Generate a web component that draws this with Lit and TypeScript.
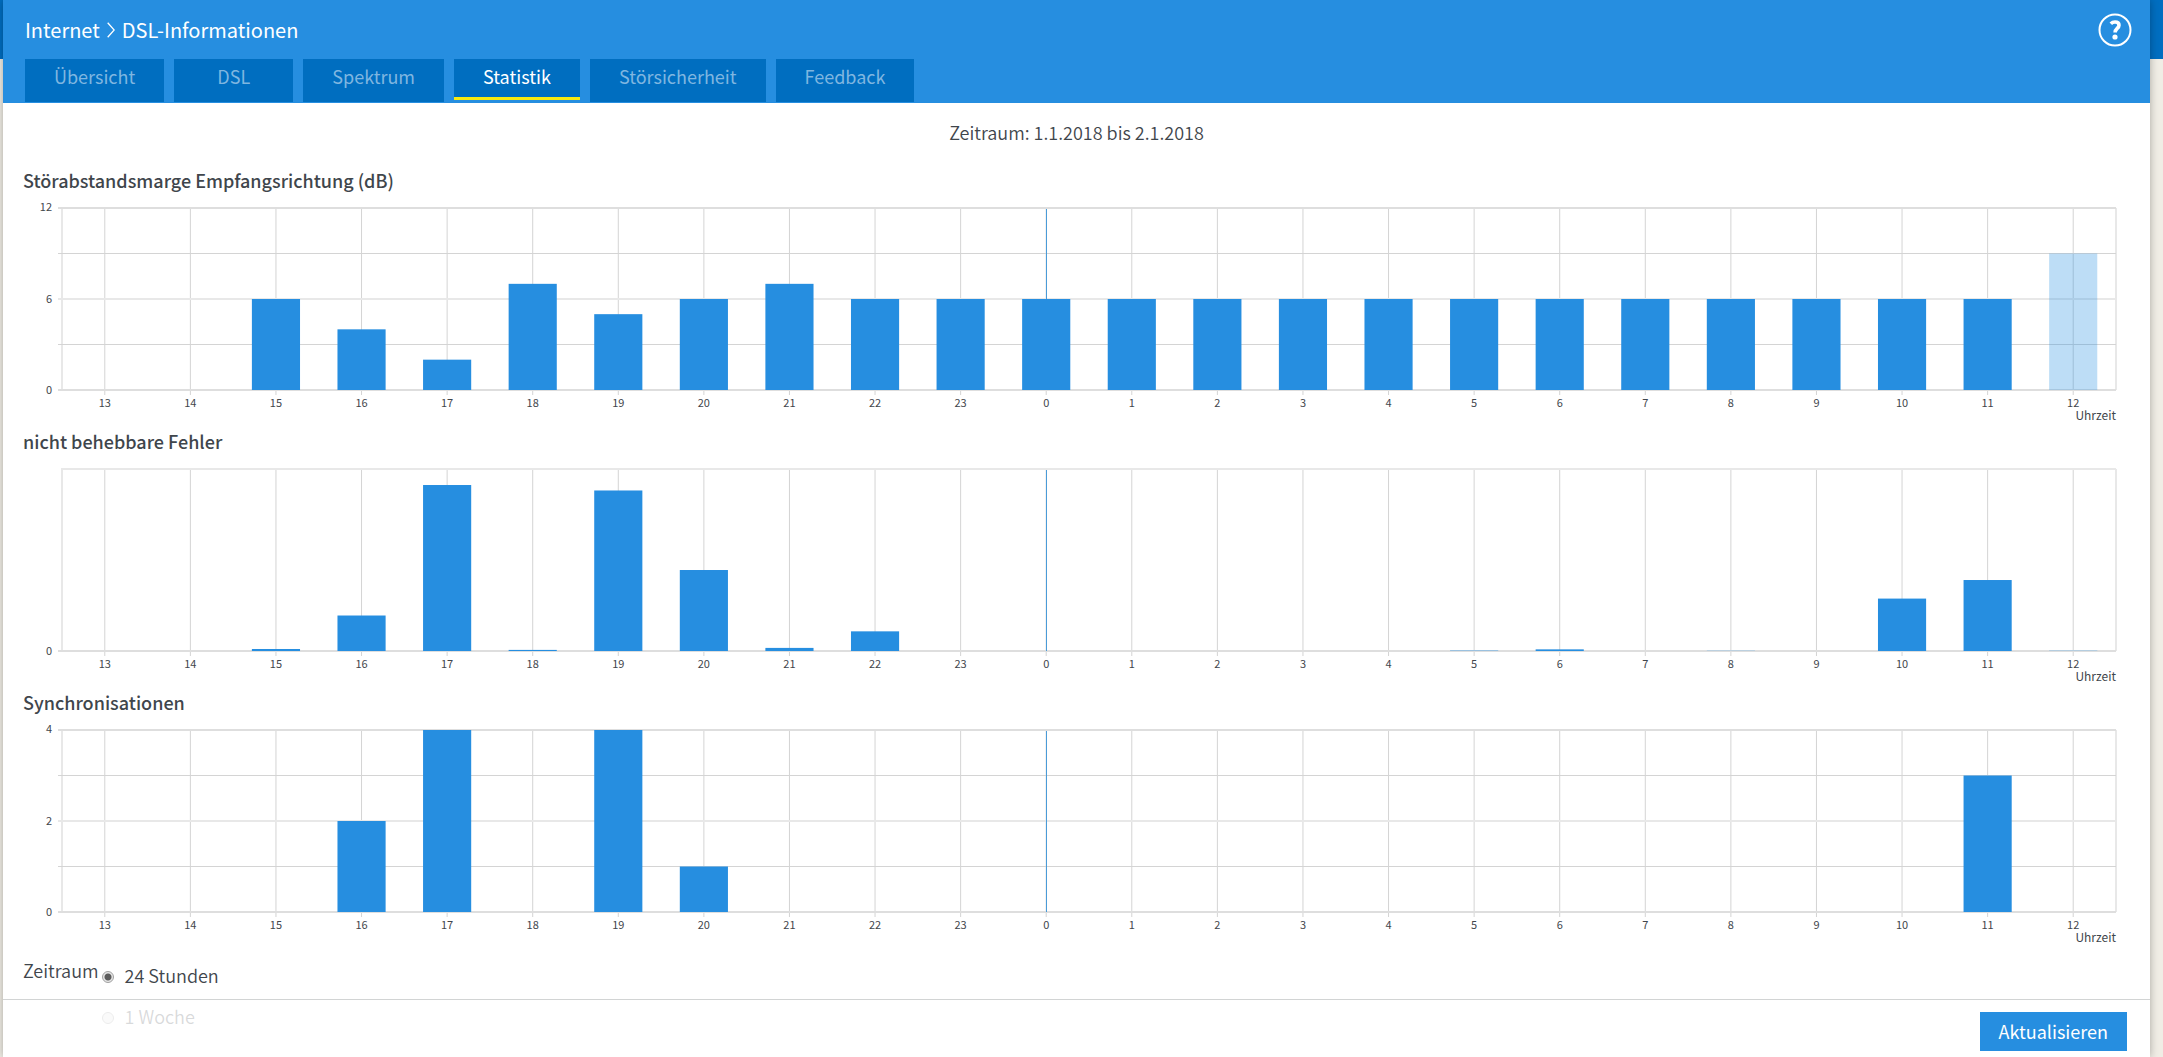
import { LitElement, html, svg, css } from "lit";
import { customElement, property } from "lit/decorators.js";

interface Bar {
  slot: number;
  share: number;
  pending?: boolean;
}

interface Gridline {
  share: number;
  weight: "edge" | "major" | "minor";
  noTick?: boolean;
}

const HOURS = Array.from({ length: 24 }, (_, i) => (13 + i) % 24);
const SLOT = 100 / HOURS.length;
const BAR_WIDTH = SLOT * 0.5625;

@customElement("bar-chart")
export class BarChart extends LitElement {
  @property() heading = "";
  @property({ attribute: false }) bars: Bar[] = [];
  @property({ attribute: false }) lines: Gridline[] = [];
  @property({ attribute: false }) labels: string[] = [];

  static styles = css`
    :host {
      display: block;
    }
    .heading {
      margin: 0;
      font-size: 18px;
      line-height: 28px;
      font-weight: 500;
    }
    .frame {
      display: grid;
      grid-template-columns: 29px minmax(0, 1fr);
      column-gap: 10px;
      padding: 14px 0 0;
      font-size: 11px;
      line-height: 14px;
    }
    .scale {
      display: flex;
      flex-direction: column;
      justify-content: space-between;
      text-align: right;
      margin: -9px 0 -6px;
    }
    .scale.single {
      justify-content: flex-end;
    }
    .plot {
      display: block;
      width: 100%;
      height: 182px;
      overflow: visible;
    }
    .grid {
      stroke: #d4d4d4;
    }
    .edge {
      stroke: #dedede;
      stroke-width: 2;
    }
    .major {
      stroke: #e8e8e8;
      stroke-width: 2;
    }
    .midnight {
      stroke: #4a9bd8;
      shape-rendering: crispEdges;
    }
    .bar {
      fill: #268ee0;
    }
    .pending {
      fill-opacity: 0.3;
    }
    .hours {
      grid-column: 2;
      display: grid;
      grid-template-columns: repeat(24, minmax(0, 1fr));
      text-align: center;
      padding-top: 5px;
    }
    .unit {
      grid-column: 2;
      text-align: right;
      font-size: 12px;
      line-height: 12px;
    }
  `;

  render() {
    return html`
      <h2 class="heading">${this.heading}</h2>
      <div class="frame">
        <div class="scale ${this.labels.length === 1 ? "single" : ""}">
          ${this.labels.map((l) => html`<span>${l}</span>`)}
        </div>
        <svg class="plot" role="img" aria-label=${this.heading}>
          <line class="major" x1="0" x2="0" y1="0" y2="100%"></line>
          <line class="major" x1="100%" x2="100%" y1="0" y2="100%"></line>
          ${HOURS.map((_, i) => {
            const x = `${(i + 0.5) * SLOT}%`;
            return svg`<line class="grid" x1=${x} x2=${x} y1="0" y2="187"></line>`;
          })}
          ${this.lines.map((l) => {
            const y = `${(1 - l.share) * 100}%`;
            return svg`<line class="grid ${l.weight}" x1=${l.noTick ? -1 : -4} x2="100%" y1=${y} y2=${y}></line>`;
          })}
          ${HOURS.map((h, i) => {
            const x = `${(i + 0.5) * SLOT}%`;
            return h === 0 ? svg`<line class="midnight" x1=${x} x2=${x} y1="1" y2="100%"></line>` : "";
          })}
          ${this.bars.map(
            (b) => svg`<rect class="bar ${b.pending ? "pending" : ""}"
              x="${(b.slot + 0.5) * SLOT - BAR_WIDTH / 2}%" y="${(1 - b.share) * 100}%"
              width="${BAR_WIDTH}%" height="${b.share * 100}%"></rect>`
          )}
        </svg>
        <div class="hours">${HOURS.map((h) => html`<span>${h}</span>`)}</div>
        <div class="unit">Uhrzeit</div>
      </div>
    `;
  }
}

const QUARTERS: Gridline[] = [
  { share: 1, weight: "edge" },
  { share: 0.75, weight: "minor" },
  { share: 0.5, weight: "major" },
  { share: 0.25, weight: "minor" },
  { share: 0, weight: "edge" },
];

const BOUNDS: Gridline[] = [
  { share: 1, weight: "major", noTick: true },
  { share: 0, weight: "edge" },
];

const MARGIN: Bar[] = [6, 4, 2, 7, 5, 6, 7, 6, 6, 6, 6, 6, 6, 6, 6, 6, 6, 6, 6, 6, 6, 9].map((v, i) => ({
  slot: i + 2,
  share: v / 12,
  pending: i === 21,
}));

const ERRORS: Bar[] = [
  { slot: 2, share: 0.011 },
  { slot: 3, share: 0.195 },
  { slot: 4, share: 0.912 },
  { slot: 5, share: 0.006 },
  { slot: 6, share: 0.882 },
  { slot: 7, share: 0.445 },
  { slot: 8, share: 0.017 },
  { slot: 9, share: 0.108 },
  { slot: 16, share: 0.002 },
  { slot: 17, share: 0.009 },
  { slot: 19, share: 0.001 },
  { slot: 21, share: 0.288 },
  { slot: 22, share: 0.39 },
  { slot: 23, share: 0.004, pending: true },
];

const SYNCS: Bar[] = [
  { slot: 3, share: 0.5 },
  { slot: 4, share: 1 },
  { slot: 6, share: 1 },
  { slot: 7, share: 0.25 },
  { slot: 22, share: 0.75 },
];

const TABS = ["Übersicht", "DSL", "Spektrum", "Statistik", "Störsicherheit", "Feedback"];

@customElement("app-root")
export class AppRoot extends LitElement {
  static styles = css`
    :host {
      display: block;
      height: 100vh;
      overflow: hidden;
      background: linear-gradient(#006ec0 59px, #f0ede5 59px);
      color: #3f464c;
      font-family: "Noto Sans CJK SC", "Open Sans", sans-serif;
      font-size: 18px;
      line-height: 28px;
    }
    .page {
      box-sizing: border-box;
      height: 100%;
      margin: 0 13px 0 3px;
      background: #fff;
      box-shadow: 0 0 8px rgba(0, 0, 0, 0.3);
      display: flex;
      flex-direction: column;
      position: relative;
    }
    .header {
      flex: none;
      background: #268ee0;
      color: #fff;
      padding: 0 18px 1px 22px;
    }
    .top {
      display: flex;
      justify-content: space-between;
      align-items: center;
      height: 59px;
    }
    .crumbs {
      display: flex;
      align-items: center;
      gap: 7px;
      font-size: 20px;
    }
    .crumbs a {
      color: inherit;
      text-decoration: none;
    }
    .chevron {
      width: 8px;
      height: 16px;
    }
    .help {
      padding: 0;
      border: 0;
      background: none;
      display: flex;
    }
    .help svg {
      width: 34px;
      height: 34px;
    }
    .tabs {
      display: flex;
      gap: 10px;
    }
    .tab {
      box-sizing: border-box;
      height: 43px;
      min-width: 119px;
      padding: 3px 29px 0;
      background: #006ec0;
      color: #7fb6e0;
      text-align: center;
      text-decoration: none;
    }
    .tab.active {
      color: #fff;
      background: linear-gradient(
        #006ec0 38px,
        #f8ea10 38px,
        #f8ea10 41px,
        #268ee0 41px
      );
    }
    .content {
      flex: 1;
      min-height: 0;
      overflow: hidden;
      padding: 15px 20px 0;
    }
    .period {
      margin: 0 0 20px;
      text-align: center;
      font-weight: 350;
    }
    .charts {
      display: grid;
      gap: 6px;
      padding-right: 14px;
    }
    .range {
      display: flex;
      margin: 13px 0 0;
      font-weight: 350;
    }
    .options {
      display: grid;
      gap: 13px;
      padding: 5px 0 0 3px;
    }
    .option {
      display: flex;
      align-items: center;
      gap: 11px;
    }
    .option input {
      appearance: none;
      box-sizing: border-box;
      width: 12px;
      height: 12px;
      margin: 4px 0 0;
      border: 1px solid #a0a0a0;
      border-radius: 50%;
      background: #e6e6e6;
    }
    .option input:checked {
      background: radial-gradient(circle, #5c5c5c 3px, #e6e6e6 4px);
    }
    .footer {
      position: absolute;
      left: 0;
      right: 0;
      bottom: 0;
      display: flex;
      justify-content: flex-end;
      padding: 12px 23px 6px;
      border-top: 1px solid #d2d4d4;
      background: rgba(255, 255, 255, 0.8);
    }
    .refresh {
      height: 39px;
      padding: 0 19px 2px;
      border: 0;
      background: #268ee0;
      color: #fff;
      font: inherit;
    }
  `;

  render() {
    return html`
      <div class="page">
        <header class="header">
          <div class="top">
            <nav class="crumbs" aria-label="Pfad">
              <a href="#internet">Internet</a>
              <svg class="chevron" viewBox="0 0 8 16" fill="none" stroke="#fff" stroke-width="1.300" aria-hidden="true">
                <path d="M0.7 0.7 7.2 8 0.7 15.3"></path>
              </svg>
              <span>DSL-Informationen</span>
            </nav>
            <button class="help" aria-label="Hilfe">
              <svg viewBox="0 0 34 34" fill="none" stroke="#fff" aria-hidden="true">
                <circle cx="17" cy="17" r="15.5" stroke-width="2"></circle>
                <path d="M12.8 10.700c1.200-1.200 2.600-1.700 4.200-1.700 2.500 0 4 1.200 4 3.200 0 3.300-3.900 3.200-3.900 7.300" stroke-width="3.600"></path>
                <circle cx="17" cy="24" r="2.600" fill="#fff" stroke="none"></circle>
              </svg>
            </button>
          </div>
          <nav class="tabs">
            ${TABS.map(
              (t) => html`<a class="tab ${t === "Statistik" ? "active" : ""}" href="#${t.toLowerCase()}">${t}</a>`
            )}
          </nav>
        </header>
        <main class="content">
          <p class="period">Zeitraum: 1.1.2018 bis 2.1.2018</p>
          <div class="charts">
            <bar-chart heading="Störabstandsmarge Empfangsrichtung (dB)" .bars=${MARGIN} .lines=${QUARTERS}
              .labels=${["12", "6", "0"]}></bar-chart>
            <bar-chart heading="nicht behebbare Fehler" .bars=${ERRORS} .lines=${BOUNDS}
              .labels=${["0"]}></bar-chart>
            <bar-chart heading="Synchronisationen" .bars=${SYNCS} .lines=${QUARTERS}
              .labels=${["4", "2", "0"]}></bar-chart>
          </div>
          <div class="range" role="radiogroup" aria-labelledby="range-label">
            <span id="range-label">Zeitraum</span>
            <div class="options">
              <label class="option"><input type="radio" name="range" value="day" checked />24 Stunden</label>
              <label class="option"><input type="radio" name="range" value="week" />1 Woche</label>
            </div>
          </div>
        </main>
        <footer class="footer"><button class="refresh">Aktualisieren</button></footer>
      </div>
    `;
  }
}
